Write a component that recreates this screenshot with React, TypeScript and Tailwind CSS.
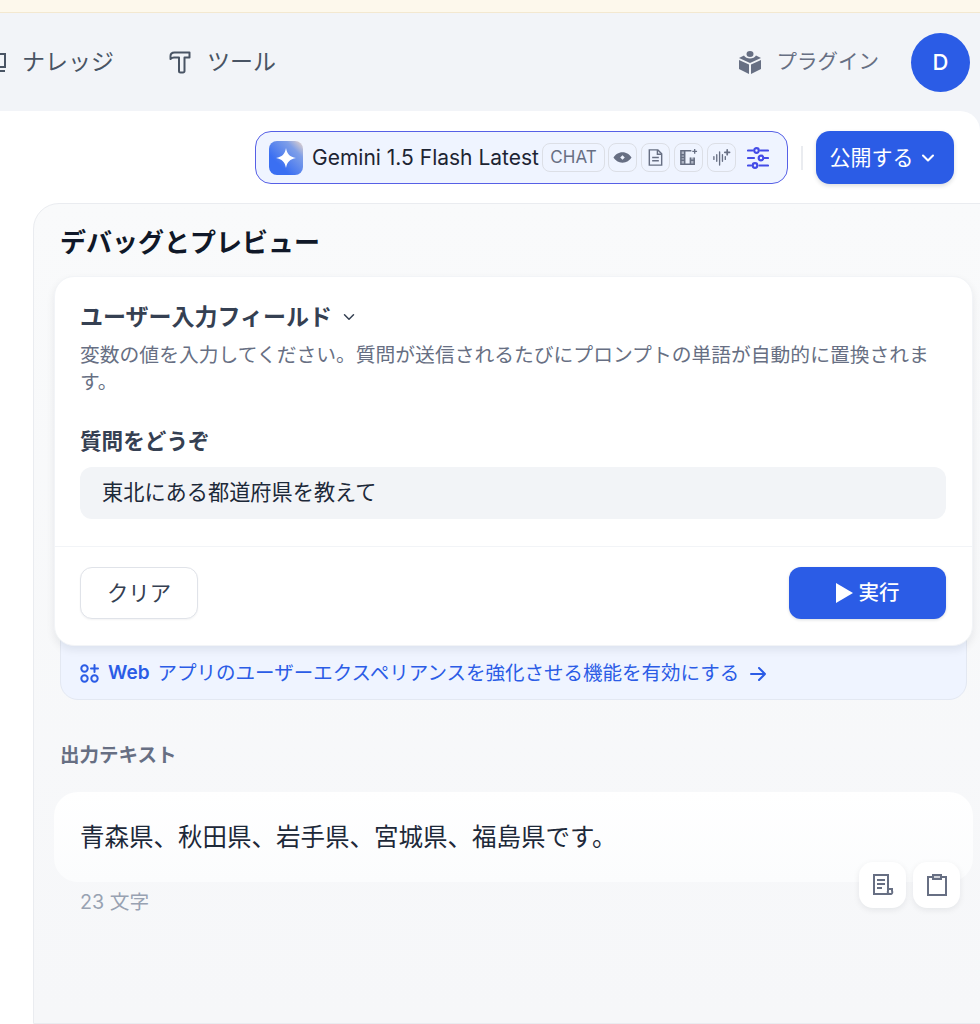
import { ChevronDown } from "lucide-react";

function ChipIcon({ children }: { children: React.ReactNode }) {
  return (
    <div className="flex h-[29px] w-[29px] shrink-0 items-center justify-center rounded-lg border-[1.5px] border-[#dcdfe6] text-[#676f83]">
      {children}
    </div>
  );
}

function ModelPill() {
  return (
    <div className="flex h-[53px] w-[533px] items-center rounded-2xl border-[1.5px] border-[#5660e6] bg-[#eff4ff] pl-[13px] pr-[14px]">
      <svg width="34" height="34" viewBox="0 0 34 34" className="shrink-0">
        <defs>
          <linearGradient id="gem" x1="0" y1="1" x2="1" y2="0">
            <stop offset="0.3" stopColor="#3a6ff2" />
            <stop offset="0.75" stopColor="#7f9fe8" />
            <stop offset="1" stopColor="#f0d9c8" />
          </linearGradient>
        </defs>
        <rect width="34" height="34" rx="8" fill="url(#gem)" />
        <path d="M17 7c1 6 4 9 10 10-6 1-9 4-10 10-1-6-4-9-10-10 6-1 9-4 10-10z" fill="#fff" />
      </svg>
      <span className="ml-[9px] text-[21px] leading-none text-[#1d2433] whitespace-nowrap">Gemini 1.5 Flash Latest</span>
      <div className="ml-[3px] flex h-[29px] w-[63px] shrink-0 items-center justify-center rounded-lg border-[1.5px] border-[#dcdfe6] text-[17px] text-[#676f83]">
        CHAT
      </div>
      <div className="ml-[3px] flex gap-[4px]">
        <ChipIcon>
          <svg width="19" height="19" viewBox="0 0 20 20" fill="currentColor">
            <path fillRule="evenodd" d="M10 4.500c4.300 0 7.600 2.600 9.500 5.500-1.900 2.900-5.200 5.500-9.500 5.500S2.400 12.900.5 10C2.400 7.100 5.700 4.500 10 4.500zM10 7.600L7.600 10l2.400 2.400 2.400-2.400z" />
          </svg>
        </ChipIcon>
        <ChipIcon>
          <svg width="19" height="19" viewBox="0 0 20 20" fill="none" stroke="currentColor" strokeWidth="1.500">
            <path d="M3.500 2h9l4 4v12h-13z" />
            <path d="M12 2v4.500h4.500M6.500 10h7M6.500 13.500h7" />
          </svg>
        </ChipIcon>
        <ChipIcon>
          <svg width="19" height="19" viewBox="0 0 20 20" fill="none" stroke="currentColor" strokeWidth="1.600">
            <path d="M13 3H2v14h14v-7" />
            <path d="M6 3v14M12 10v7M2 7h4M2 10h4M2 13h4M12 13h4" />
            <rect x="2" y="3" width="4" height="14" fill="currentColor" opacity=".45" stroke="none" />
            <rect x="12" y="10" width="4" height="7" fill="currentColor" opacity=".45" stroke="none" />
            <path d="M16.500 1v5M14 3.500h5" strokeWidth="1.400" />
          </svg>
        </ChipIcon>
        <ChipIcon>
          <svg width="19" height="19" viewBox="0 0 20 20" fill="none" stroke="currentColor" strokeWidth="1.400" strokeLinecap="round">
            <path d="M2 9v3M5 7v7M8 4v14M11 7v7M14 9v3" />
            <path d="M16 2v5M13.500 4.500h5" strokeWidth="1.800" />
          </svg>
        </ChipIcon>
      </div>
      <svg width="22" height="22" viewBox="0 0 22 22" fill="none" stroke="#444ce7" strokeWidth="2.200" strokeLinecap="round" className="ml-[11px] shrink-0">
        <path d="M1 3.500h4.500M13.500 3.500H21M1 11h6M17 11h4M1 18.500h3M12.500 18.500H21" />
        <circle cx="9.500" cy="3.500" r="2.300" />
        <circle cx="14" cy="11" r="2.300" />
        <circle cx="8" cy="18.500" r="2.300" />
      </svg>
    </div>
  );
}

export default function App() {
  return (
    <div
      className="flex h-[1024px] w-[980px] flex-col overflow-hidden bg-[#f2f4f8]"
      style={{ fontFamily: 'Inter, "Noto Sans CJK JP", sans-serif' }}
    >
      <div className="h-[13px] shrink-0 border-b border-[#f3e8d0] bg-[#fdf8ec]" />

      <header className="flex h-[98px] shrink-0 items-center justify-between pr-[10px]">
        <nav className="flex items-center text-[23px] text-[#495464]">
          <div className="-ml-[17px] flex items-center gap-[15px]">
            <svg width="24" height="24" viewBox="0 0 24 24" fill="none" stroke="#495464" strokeWidth="2">
              <path d="M2 4h20v13H2zM2 21h20M8 8h8v5H8z" />
            </svg>
            <span>ナレッジ</span>
          </div>
          <div className="ml-[55px] flex items-center gap-[16px]">
            <svg width="22" height="24" viewBox="0 0 22 24" fill="none" stroke="#495464" strokeWidth="2" strokeLinejoin="round">
              <path d="M1.500 9V6c0-2 1.500-3.500 4-3.500h15V7.500H15.500V21a1.500 1.500 0 01-1.500 1.500h-2.500A1.500 1.500 0 0110 21V7.500H5c-1.500 0-2.500.5-3.500 1.500z" />
            </svg>
            <span>ツール</span>
          </div>
        </nav>
        <div className="flex items-center">
          <svg width="24" height="26" viewBox="0 0 24 26" fill="#676f83">
            <ellipse cx="12" cy="5" rx="3.500" ry="3" />
            <path d="M1 9l5-2.500c1 2 3.500 3 6 3s5-1 6-3L23 9l-11 5zM1 11l10 4.600V25L1 20zM23 11l-10 4.600V25l10-5z" />
          </svg>
          <span className="ml-[15px] text-[20.500px] text-[#676f83]">プラグイン</span>
          <div className="ml-[32px] flex h-[59px] w-[59px] items-center justify-center rounded-full bg-[#2b5ce6] text-[22px] font-medium text-white">
            D
          </div>
        </div>
      </header>

      <main className="flex flex-1 flex-col rounded-tr-[20px] bg-white">
        <div className="flex shrink-0 items-center justify-end pr-[26px] pt-[20px]">
          <ModelPill />
          <div className="mx-[13px] h-[24px] w-[2px] bg-[#eaecf0]" />
          <button className="flex h-[53px] w-[138px] items-center justify-center gap-[4px] rounded-[14px] bg-[#2b5ce6] pr-[3px] text-[21px] text-white shadow-[0_2px_4px_rgba(16,24,40,0.15)]">
            公開する
            <ChevronDown size={20} strokeWidth={2.500} />
          </button>
        </div>

        <section className="ml-[33px] mt-[19px] -mr-[40px] flex-1 rounded-tl-[26px] border border-[#eaecf0] bg-gradient-to-b from-[#f9fafb] to-[#f6f7f9] pl-[20px] pr-[46px]">
          <h2 className="ml-[6px] mt-[20px] text-[26px] font-bold leading-[38px] text-[#101828]">デバッグとプレビュー</h2>

          <div className="relative z-10 mt-[14px] rounded-[20px] border border-[#f2f4f7] bg-white shadow-[0_4px_8px_rgba(16,24,40,0.08)]">
            <div className="border-b border-[#f2f4f7] pb-[27px] pl-[25px] pr-[26px] pt-[25px]">
              <div className="flex items-center gap-[8px] text-[23px] font-bold leading-[30px] text-[#354052]">
                ユーザー入力フィールド
                <ChevronDown size={18} strokeWidth={2} />
              </div>
              <p className="mt-[10px] text-[19.800px] leading-[27px] text-[#676f83]">
                変数の値を入力してください。質問が送信されるたびにプロンプトの単語が自動的に置換されます。
              </p>
              <label className="mt-[30px] block text-[21.600px] font-bold leading-[30px] text-[#354052]">質問をどうぞ</label>
              <div className="mt-[11px] flex h-[52px] items-center rounded-xl bg-[#f2f4f7] px-[22px] text-[21.200px] text-[#1d2939]">
                東北にある都道府県を教えて
              </div>
            </div>
            <div className="flex justify-between pb-[26px] pl-[25px] pr-[26px] pt-[20px]">
              <button className="h-[52px] w-[118px] rounded-xl border border-[#e0e3e9] bg-white text-[21.400px] text-[#354052] shadow-[0_1px_2px_rgba(16,24,40,0.05)]">
                クリア
              </button>
              <button className="flex h-[52px] w-[157px] items-center justify-center gap-[6px] rounded-xl bg-[#2b5ce6] text-[20.500px] font-medium text-white shadow-[0_1px_3px_rgba(16,24,40,0.15)]">
                <svg width="17" height="20" viewBox="0 0 17 20" fill="#fff">
                  <path d="M0 0l17 10L0 20z" />
                </svg>
                実行
              </button>
            </div>
          </div>

          <div className="-mt-[16px] ml-[6px] mr-[6px] flex h-[70px] items-end rounded-b-[18px] border border-[#e3e8f2] bg-[#eff4ff] px-[19px] pb-[12px] text-[19.500px] leading-[28px] text-[#2b5ce6]">
            <svg width="19" height="19" viewBox="0 0 19 19" fill="none" stroke="#2b5ce6" strokeWidth="2" strokeLinecap="round" className="mb-[4px] shrink-0">
              <circle cx="4.500" cy="4.500" r="3.200" />
              <circle cx="4.500" cy="14.500" r="3.200" />
              <circle cx="14.500" cy="14.500" r="3.200" />
              <path d="M14.500 1v7M11 4.500h7" />
            </svg>
            <span className="ml-[9px] text-[19px] font-semibold">Web</span>
            <span className="ml-[8px]">アプリのユーザーエクスペリアンスを強化させる機能を有効にする</span>
            <svg width="16" height="14" viewBox="0 0 16 14" fill="none" stroke="#2b5ce6" strokeWidth="2" strokeLinecap="round" strokeLinejoin="round" className="mb-[6px] ml-[11px] shrink-0">
              <path d="M1 7h14M9 1l6 6-6 6" />
            </svg>
          </div>

          <div className="ml-[6px] mt-[41px] text-[19.500px] font-bold leading-[28px] text-[#676f83]">出力テキスト</div>

          <div className="relative mt-[23px]">
            <div className="flex h-[90px] items-center rounded-[24px] bg-gradient-to-b from-white to-[#fbfcfd] pl-[26px] text-[24.500px] text-[#1d2939]">
              青森県、秋田県、岩手県、宮城県、福島県です。
            </div>
            <div className="absolute right-[13px] top-[70px] flex gap-[7px] text-[#676f83]">
              <div className="flex h-[46px] w-[47px] items-center justify-center rounded-[14px] bg-white shadow-[0_2px_6px_rgba(16,24,40,0.08)]">
                <svg width="22" height="22" viewBox="0 0 22 22" fill="none" stroke="currentColor" strokeWidth="2">
                  <path d="M17 20H2V1h14v16a2 2 0 002 3h1a2 2 0 001-3v-2h-4" />
                  <path d="M5 6h8M5 10h8M5 14h5" />
                </svg>
              </div>
              <div className="flex h-[46px] w-[47px] items-center justify-center rounded-[14px] bg-white shadow-[0_2px_6px_rgba(16,24,40,0.08)]">
                <svg width="20" height="22" viewBox="0 0 20 22" fill="none" stroke="currentColor" strokeWidth="2">
                  <path d="M6 3H1v18h18V3h-5" />
                  <rect x="6" y="1" width="8" height="4" fill="currentColor" fillOpacity=".3" />
                </svg>
              </div>
            </div>
          </div>
          <div className="ml-[26px] mt-[7px] text-[19.700px] leading-[27px] text-[#98a2b2]">23 文字</div>
        </section>
      </main>
    </div>
  );
}
